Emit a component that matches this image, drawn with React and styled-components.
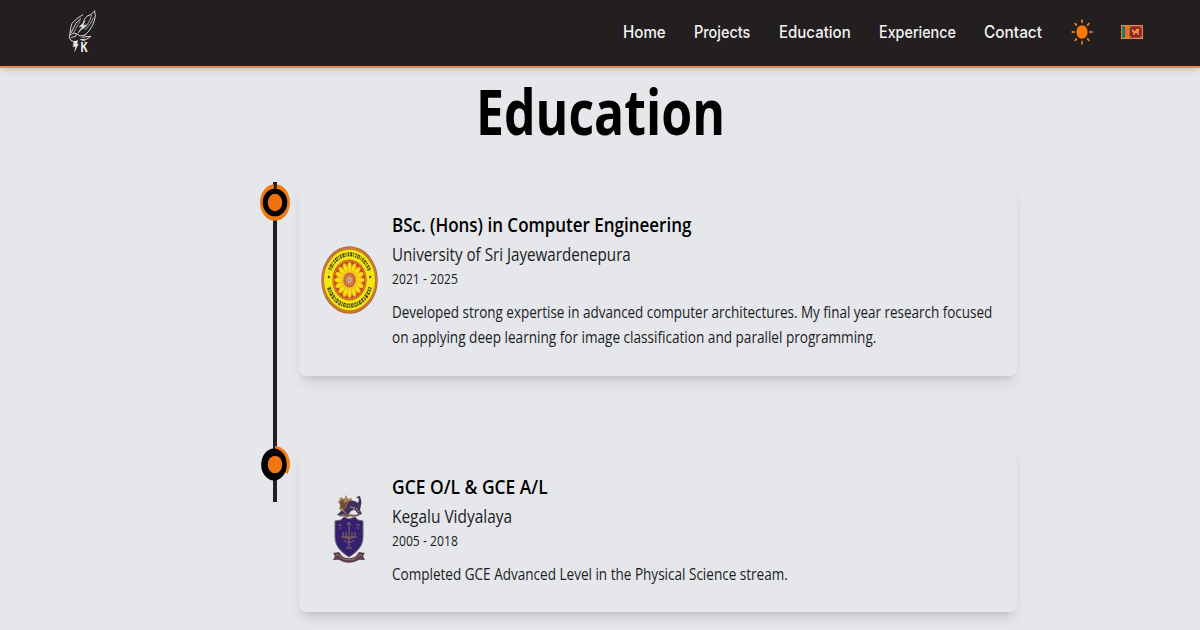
import React, { useLayoutEffect, useRef, useState } from "react";
import styled, { createGlobalStyle } from "styled-components";

const GlobalStyle = createGlobalStyle`
  * { box-sizing: border-box; }
  body {
    margin: 0;
    background: #e5e7eb;
    color: #000;
    font-family: "Open Sans", "Noto Sans", sans-serif;
    overflow: hidden;
  }
`;

const Page = styled.div`
  height: 630px;
  overflow: hidden;
`;

const Header = styled.header`
  display: flex;
  align-items: center;
  justify-content: space-between;
  height: 68px;
  padding: 0 57px 3px 68px;
  background: #231f20;
  border-bottom: 2px solid #e08d52;
  box-shadow: 0 4px 7px -1px rgba(0, 0, 0, 0.11), 0 2px 4px -2px rgba(0, 0, 0, 0.1);
`;

const Nav = styled.nav`
  display: flex;
  align-items: center;
`;

const NavLink = styled.a`
  margin-right: 28.4px;
  color: #f3f3f3;
  font: 500 16.6px/24px Inter, sans-serif;
`;

const IconSlot = styled.span`
  display: flex;
  margin-right: ${(p) => p.$gap || 0}px;
`;

const Line = styled.span`
  display: block;
  width: ${(p) => p.$width}px;
  white-space: nowrap;
`;

const LineInner = styled.span`
  display: inline-block;
  transform-origin: 0 50%;
`;

const Main = styled.main`
  display: flex;
  flex-direction: column;
  align-items: center;
`;

const Title = styled.h1`
  margin: 1px 0 0;
  padding-left: 1px;
  font-size: 62px;
  font-weight: 700;
  line-height: 84px;
`;

const Timeline = styled.section`
  display: flex;
  align-self: flex-start;
  gap: 22px;
  margin: 29px 0 0 260px;
`;

const Rail = styled.div`
  position: relative;
  width: 30px;
  height: 319.5px;
  padding-left: 13.4px;
`;

const RailLine = styled.div`
  width: 3.6px;
  height: 100%;
  background: #231f20;
`;

const Dot = styled.svg`
  position: absolute;
  left: 0;
  top: ${(p) => p.$top}px;
`;

const Cards = styled.div`
  display: flex;
  flex-direction: column;
  gap: 68.8px;
  margin-left: -13px;
`;

const Card = styled.article`
  display: flex;
  align-items: center;
  width: 718px;
  padding: 29px 22px 25px;
  border-radius: 7px;
  background: #e5e7eb;
  box-shadow: 0 10px 13px -3px rgba(0, 0, 0, 0.1), 0 4px 6px -4px rgba(0, 0, 0, 0.12);
`;

const Emblem = styled.div`
  display: flex;
  justify-content: center;
  width: 57px;
  margin: 0 14px 2.4px -0.5px;
`;

const Degree = styled.h2`
  margin: 0;
  font-size: 20px;
  font-weight: 600;
  line-height: 28px;
`;

const School = styled.div`
  margin-top: 1px;
  font-size: 18px;
  line-height: 28px;
  color: #1b1c1e;
`;

const Years = styled.div`
  margin-top: 1px;
  font-size: 14px;
  line-height: 20px;
  color: #1b1c1e;
`;

const Summary = styled.div`
  margin-top: 10.6px;
  font-size: 16px;
  line-height: 25.5px;
  color: #1b1c1e;
`;

// Condenses a line of text horizontally so that it fills the given width.
function Fit({ width, children }) {
  const ref = useRef(null);
  const [scale, setScale] = useState(1);
  useLayoutEffect(() => {
    setScale(width / ref.current.offsetWidth);
  }, [width, children]);
  return (
    <Line $width={width}>
      <LineInner ref={ref} style={{ transform: `scaleX(${scale})` }}>{children}</LineInner>
    </Line>
  );
}

function Logo() {
  return (
    <svg width="30" height="46" viewBox="0 0 30 46" fill="none" stroke="#e6e6e6" strokeWidth="0.9" strokeLinecap="round" strokeLinejoin="round">
      <path d="M26.5 2 23 5.5 19 7.2 16.5 10 15.5 13M26.5 2l.8 4.2-.8 5-2 5.2-3.5 5.6-4 4" />
      <path d="M23.5 6 22 11l-3 5-3.5 4M25.5 9l-3 5.5-5 6" strokeWidth="0.7" />
      <path d="M14.8 5.8 9 9.5 4 14.2 2.8 18.5 2.2 23M13 9.5 8 14 5 20l-2 4" />
      <path d="M12 12 8 19l-2.5 5" strokeWidth="0.6" />
      <path d="m17 12-6 6 3.4-.4L9.8 24l8.8-8-3.4.2z" fill="#e6e6e6" strokeWidth="0.4" />
      <path d="m2.2 23-1 5 1.8 3.6 3.8 1.2M2.5 26l3.2-2 2.8.8-1 2.7-4 .8M9 25l3 2 5-1M14 28.2l9-.9-4.5 3-6 .2 4.5 1.6" />
      <path d="m5.8 32.5 4.2-1-1.5 3.8 2-.5-4 8 1-5.5-2.3.5z" fill="#eee" strokeWidth="0.3" />
      <text x="12.4" y="43.2" fill="#fff" stroke="none" fontFamily="Lato, sans-serif" fontSize="13" fontWeight="900" textLength="7" lengthAdjust="spacingAndGlyphs">K</text>
    </svg>
  );
}

function Sun() {
  return (
    <svg width="22" height="28" viewBox="-11 -14 22 28">
      <ellipse rx="5.6" ry="6.8" fill="#ff7a00" />
      <g transform="scale(1 1.22)" stroke="#ee7d1c" strokeWidth="1.7" strokeLinecap="round">
        {[0, 45, 90, 135, 180, 225, 270, 315].map((a) => (
          <path key={a} d="M0-8V-9.7" transform={`rotate(${a})`} />
        ))}
      </g>
    </svg>
  );
}

function Flag() {
  return (
    <svg width="22" height="14" viewBox="0 0 22 14">
      <rect width="22" height="14" fill="#d9903a" />
      <rect x="1" y="1.3" width="3.3" height="11.4" fill="#1f7563" />
      <rect x="4.3" y="1.3" width="3" height="11.4" fill="#e96c12" />
      <rect x="8.5" y="1.3" width="12.3" height="11.4" fill="#93202d" />
      <path d="M11 4h1.2v1.8h2.2l1.3-2h2.2l.6 1.4-1 1.1.6 3.8h-1.4l-.5-2.2-2.1.3-.7 1.9H12l.4-2.2L11 6.4z" fill="#e99a3a" />
      <path d="M9 2h1v1H9zM19.3 2h1v1h-1zM9 11h1v1H9zM19.3 11h1v1h-1z" fill="#d78a32" />
    </svg>
  );
}

function UniversityEmblem() {
  const petals = Array.from({ length: 16 }, (_, i) => i * 22.5);
  return (
    <svg width="57" height="68" viewBox="-28.5 -28.5 57 57" preserveAspectRatio="none">
      <circle r="28.3" fill="#b9622c" />
      <circle r="26.9" fill="none" stroke="#d99a35" strokeWidth="0.7" />
      <circle r="25.6" fill="#f5e612" />
      <g fill="none" stroke="#4b4b10">
        <path d="M-19.8-8.4A21.5 21.5 0 0 1 19.8-8.4" strokeWidth="3.4" strokeDasharray="1.6 .7 2.6 .8 .9 1.1" />
        <path d="M-20.6 6.2A21.5 21.5 0 0 0 20.6 6.2" strokeWidth="3.6" strokeDasharray="2.1 .7 1.2 .8 2.5 .8" />
        <path d="M-20.8-5.4A21.5 21.5 0 0 1 20.8-5.4M-20.8 5.4A21.5 21.5 0 0 0 20.8 5.4" stroke="#d9ca17" strokeWidth="1.1" strokeDasharray="1.6 1.2" />
      </g>
      <circle cx="-20.7" cy="-2.5" r="1.1" fill="#43480f" />
      <circle cx="20.7" cy="-2.5" r="1.1" fill="#43480f" />
      <circle r="17.2" fill="#c8662b" />
      <circle r="15.9" fill="#c63c20" stroke="#e3a32b" strokeWidth="0.6" />
      {petals.map((a) => (
        <ellipse key={a} cy="-10.6" rx="2.1" ry="4.3" fill="#ffe010" stroke="#df9b18" strokeWidth="0.5" transform={`rotate(${a})`} />
      ))}
      <circle r="8.8" fill="#f7c71a" />
      <circle r="6.6" fill="#d58e3b" />
      <circle r="5" fill="none" stroke="#b7433d" strokeWidth="1.4" strokeDasharray="1.3 1" />
      <circle r="2.8" fill="#dfc0a0" stroke="#b6625b" strokeWidth="0.8" />
      <circle r="1" fill="#b35b66" />
    </svg>
  );
}

function SchoolCrest() {
  return (
    <svg width="34" height="70" viewBox="0 0 34 70">
      <path d="M6 8 9 3l3 2 2-4 2 4 4-1-1 5 2 4-3 4-7 1-4-3 1-4z" fill="#a98552" />
      <path d="m8 8 3-3 1 4 4-2-2 5 4 1-5 3-4-2z" fill="#6f4c3c" />
      <path d="M16 8c4-3 7-1 10 1l1-4-3-2 4-1 1.5 6-1.5 8 2 4-3 1-4-5-4 1-3 4 1 2-8-1-4-1 4-4 5-2z" fill="#413057" />
      <path d="m18 13 5 1-3 3M24 14l3 4M10 16l4 3" stroke="#b6a49d" strokeWidth="0.9" fill="none" />
      <path d="M8 22c6-4 13 3 20-2" fill="none" stroke="#786052" strokeWidth="2" />
      <path d="m3 27 6-1 3-3 5 2 6-2 3 3 5 1v16c0 9-6 15-14 20C9 58 3 52 3 43z" fill="#33206f" stroke="#77636f" strokeWidth="1" />
      <g fill="none" stroke="#8b6961" strokeWidth="1">
        <path d="M11 38v4c0 3 12 3 12 0v-4M14 38v5M20 38v5M9 43h16M17 29v24M14 54h6M12 46c1 3 9 3 10 0" />
        <path d="M6 31h4M7 34h2M24 31h4M25 34h2M15 31l2-3 2 3" />
      </g>
      <path d="m1 59 6-1 3 4c4 3 10 3 14 0l3-4 6 1-2 3 2 4-6-.3c-6 4-14 4-20 0L1 66l2-4z" fill="#5b3e50" />
      <path d="m4 61 3 .2 3 3c4 2 10 2 14 0l3-3 3-.2" fill="none" stroke="#b49b91" strokeWidth="0.9" strokeDasharray="1.3 .8" />
    </svg>
  );
}

const links = [
  ["Home", 42.8],
  ["Projects", 56.5],
  ["Education", 71.5],
  ["Experience", 76.8],
  ["Contact", 58.4],
];

const entries = [
  {
    emblem: <UniversityEmblem />,
    degree: ["BSc. (Hons) in Computer Engineering", 299],
    school: ["University of Sri Jayewardenepura", 238.5],
    years: "2021 - 2025",
    summary: [
      ["Developed strong expertise in advanced computer architectures. My final year research focused", 600],
      ["on applying deep learning for image classification and parallel programming.", 484],
    ],
  },
  {
    emblem: <SchoolCrest />,
    degree: ["GCE O/L & GCE A/L", 156],
    school: ["Kegalu Vidyalaya", 120],
    years: "2005 - 2018",
    summary: [["Completed GCE Advanced Level in the Physical Science stream.", 396]],
  },
];

export default function App() {
  return (
    <Page>
      <GlobalStyle />
      <Header>
        <Logo />
        <Nav>
          {links.map(([label, width]) => (
            <NavLink key={label}><Fit width={width}>{label}</Fit></NavLink>
          ))}
          <IconSlot $gap={28}><Sun /></IconSlot>
          <IconSlot><Flag /></IconSlot>
        </Nav>
      </Header>
      <Main>
        <Title><Fit width={249}>Education</Fit></Title>
        <Timeline>
          <Rail>
            <Dot $top={1} width="30" height="38" viewBox="0 0 30 38">
              <ellipse cx="15" cy="19.5" rx="15" ry="18.3" fill="#f57a0e" />
              <path d="M15.3 0v7" stroke="#231f20" strokeWidth="3" />
              <ellipse cx="15" cy="19.5" rx="9.8" ry="11.3" fill="#ee720c" stroke="#000" strokeWidth="5" />
            </Dot>
            <Dot $top={263} width="30" height="38" viewBox="0 0 30 38">
              <path d="M15 1C23.3 1 30 9.500 30 19.500c0 3.500-1 6.800-2.700 9.500L15 19.500z" fill="#ff7a0c" />
              <ellipse cx="14" cy="19.5" rx="12.8" ry="16" fill="#000" />
              <ellipse cx="15" cy="19.5" rx="7.3" ry="8.7" fill="#f0760f" />
            </Dot>
            <RailLine />
          </Rail>
          <Cards>
            {entries.map((e) => (
              <Card key={e.years}>
                <Emblem>{e.emblem}</Emblem>
                <div>
                  <Degree><Fit width={e.degree[1]}>{e.degree[0]}</Fit></Degree>
                  <School><Fit width={e.school[1]}>{e.school[0]}</Fit></School>
                  <Years><Fit width={66}>{e.years}</Fit></Years>
                  <Summary>
                    {e.summary.map(([text, width]) => (
                      <Fit key={text} width={width}>{text}</Fit>
                    ))}
                  </Summary>
                </div>
              </Card>
            ))}
          </Cards>
        </Timeline>
      </Main>
    </Page>
  );
}
